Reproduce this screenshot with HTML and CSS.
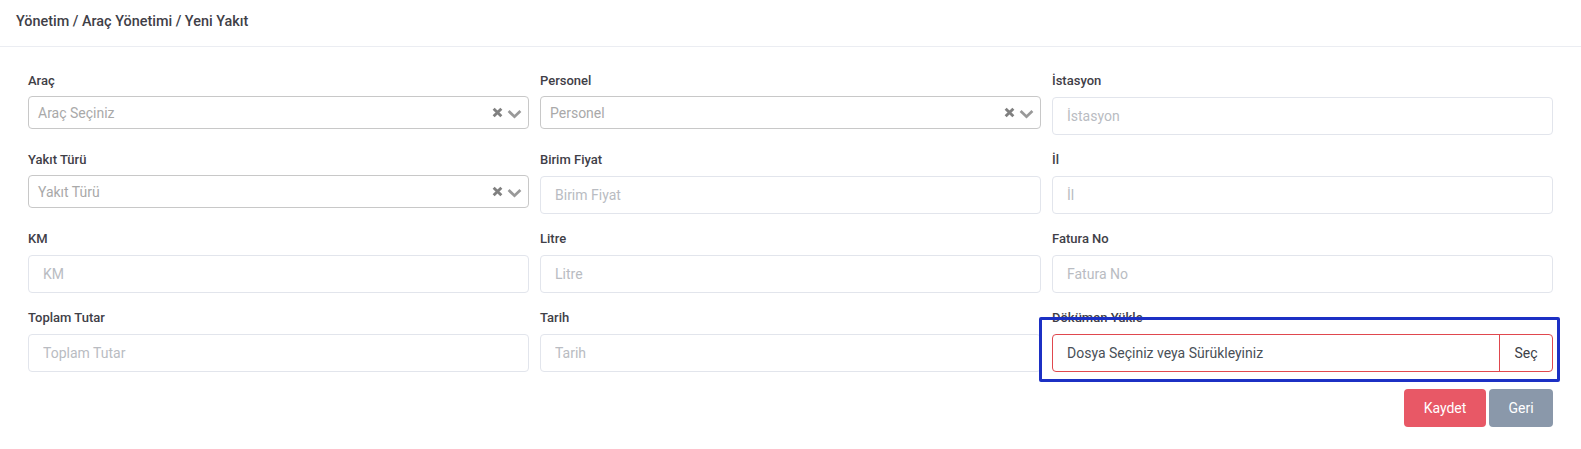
FILE: index.html
```html
<!DOCTYPE html>
<html lang="tr">
<head>
<meta charset="utf-8">
<title>Yeni Yakıt</title>
<link rel="stylesheet" href="styles.css">
</head>
<body>
<div class="page">
  <header class="topbar">
    <h1 class="crumbs">Yönetim / Araç Yönetimi / Yeni Yakıt</h1>
  </header>
  <form class="form">
    <div class="grid">
      <div class="group">
        <label class="label">Araç</label>
        <div class="select">
          <span class="select-ph">Araç Seçiniz</span>
          <span class="select-icons">
            <svg class="ic-x" viewBox="0 0 10 10"><path d="M1.5 1.5 L8.5 8.5 M8.5 1.5 L1.5 8.5"/></svg>
            <svg class="ic-chev" viewBox="0 0 14 9"><path d="M1.5 1.8 L7 7 L12.5 1.8"/></svg>
          </span>
        </div>
      </div>
      <div class="group">
        <label class="label">Personel</label>
        <div class="select">
          <span class="select-ph">Personel</span>
          <span class="select-icons">
            <svg class="ic-x" viewBox="0 0 10 10"><path d="M1.5 1.5 L8.5 8.5 M8.5 1.5 L1.5 8.5"/></svg>
            <svg class="ic-chev" viewBox="0 0 14 9"><path d="M1.5 1.8 L7 7 L12.5 1.8"/></svg>
          </span>
        </div>
      </div>
      <div class="group">
        <label class="label">İstasyon</label>
        <input class="input" placeholder="İstasyon">
      </div>

      <div class="group">
        <label class="label">Yakıt Türü</label>
        <div class="select">
          <span class="select-ph">Yakıt Türü</span>
          <span class="select-icons">
            <svg class="ic-x" viewBox="0 0 10 10"><path d="M1.5 1.5 L8.5 8.5 M8.5 1.5 L1.5 8.5"/></svg>
            <svg class="ic-chev" viewBox="0 0 14 9"><path d="M1.5 1.8 L7 7 L12.5 1.8"/></svg>
          </span>
        </div>
      </div>
      <div class="group">
        <label class="label">Birim Fiyat</label>
        <input class="input" placeholder="Birim Fiyat">
      </div>
      <div class="group">
        <label class="label">İl</label>
        <input class="input" placeholder="İl">
      </div>

      <div class="group">
        <label class="label">KM</label>
        <input class="input" placeholder="KM">
      </div>
      <div class="group">
        <label class="label">Litre</label>
        <input class="input" placeholder="Litre">
      </div>
      <div class="group">
        <label class="label">Fatura No</label>
        <input class="input" placeholder="Fatura No">
      </div>

      <div class="group">
        <label class="label">Toplam Tutar</label>
        <input class="input" placeholder="Toplam Tutar">
      </div>
      <div class="group">
        <label class="label">Tarih</label>
        <input class="input" placeholder="Tarih">
      </div>
      <div class="group group-file">
        <label class="label">Döküman Yükle</label>
        <div class="file">
          <span class="file-text">Dosya Seçiniz veya Sürükleyiniz</span>
          <span class="file-btn">Seç</span>
        </div>
        <div class="highlight"></div>
      </div>
    </div>
    <div class="actions">
      <button type="button" class="btn btn-save">Kaydet</button>
      <button type="button" class="btn btn-back">Geri</button>
    </div>
  </form>
</div>
</body>
</html>
```

FILE: styles.css
```css
* { box-sizing: border-box; }
html, body {
  margin: 0;
  padding: 0;
  background: #fff;
}
body {
  font-family: Roboto, "Liberation Sans", sans-serif;
  color: #3f4047;
}
.page {
  width: 1581px;
  height: 449px;
  overflow: hidden;
}
.topbar {
  height: 47px;
  border-bottom: 1px solid #ebedf2;
  display: flex;
  align-items: center;
  padding: 0 16px 4px;
}
.crumbs {
  margin: 0;
  font-size: 14.4px;
  font-weight: 500;
  color: #3f4047;
  line-height: 17px;
}
.form {
  padding: 26px 28px 0 28px;
}
.grid {
  display: grid;
  grid-template-columns: repeat(3, 1fr);
  column-gap: 11px;
}
.group {
  height: 79px;
  position: relative;
}
.label {
  display: block;
  font-size: 13px;
  font-weight: 500;
  color: #3f4047;
  line-height: 16px;
  margin-bottom: 8px;
}
.select {
  height: 33px;
  border: 1px solid #c8c8c8;
  border-radius: 4px;
  display: flex;
  align-items: center;
  justify-content: space-between;
  padding: 0 6px 0 9px;
  margin-top: -1px;
}
.select-ph {
  font-size: 14px;
  color: #a9a9a9;
}
.select-icons {
  display: flex;
  align-items: center;
  gap: 4px;
}
.ic-x {
  width: 11px;
  height: 11px;
  fill: none;
  stroke: #808080;
  stroke-width: 2.6;
}
.ic-chev {
  width: 15px;
  height: 10px;
  fill: none;
  stroke: #999;
  stroke-width: 2.6;
  margin-top: 2px;
}
.input {
  display: block;
  width: 100%;
  height: 38px;
  border: 1px solid #e2e5ec;
  border-radius: 4px;
  padding: 0 14px;
  font-family: Roboto, "Liberation Sans", sans-serif;
  font-size: 14px;
  color: #495057;
  outline: none;
}
.input::placeholder {
  color: #b9bcc2;
}
.file {
  height: 38px;
  border: 1px solid #e0484e;
  border-radius: 4px;
  display: flex;
  align-items: stretch;
  font-size: 14px;
  color: #495057;
}
.file-text {
  flex: 1;
  display: flex;
  align-items: center;
  padding-left: 14px;
}
.file-btn {
  width: 53px;
  border-left: 1px solid #e0484e;
  display: flex;
  align-items: center;
  justify-content: center;
  color: #3c4046;
}
.highlight {
  position: absolute;
  left: -13px;
  top: 7px;
  width: 521px;
  height: 65px;
  border: 3px solid #1c30c4;
  border-radius: 2px;
  pointer-events: none;
}
.actions {
  display: flex;
  justify-content: flex-end;
  gap: 3px;
  margin-top: 0;
}
.btn {
  height: 38px;
  border: none;
  border-radius: 4px;
  font-family: Roboto, "Liberation Sans", sans-serif;
  font-size: 14px;
  color: #fff;
  padding: 0;
}
.btn-save {
  width: 82px;
  background: #e85866;
}
.btn-back {
  width: 64px;
  background: #8a98aa;
}
```
